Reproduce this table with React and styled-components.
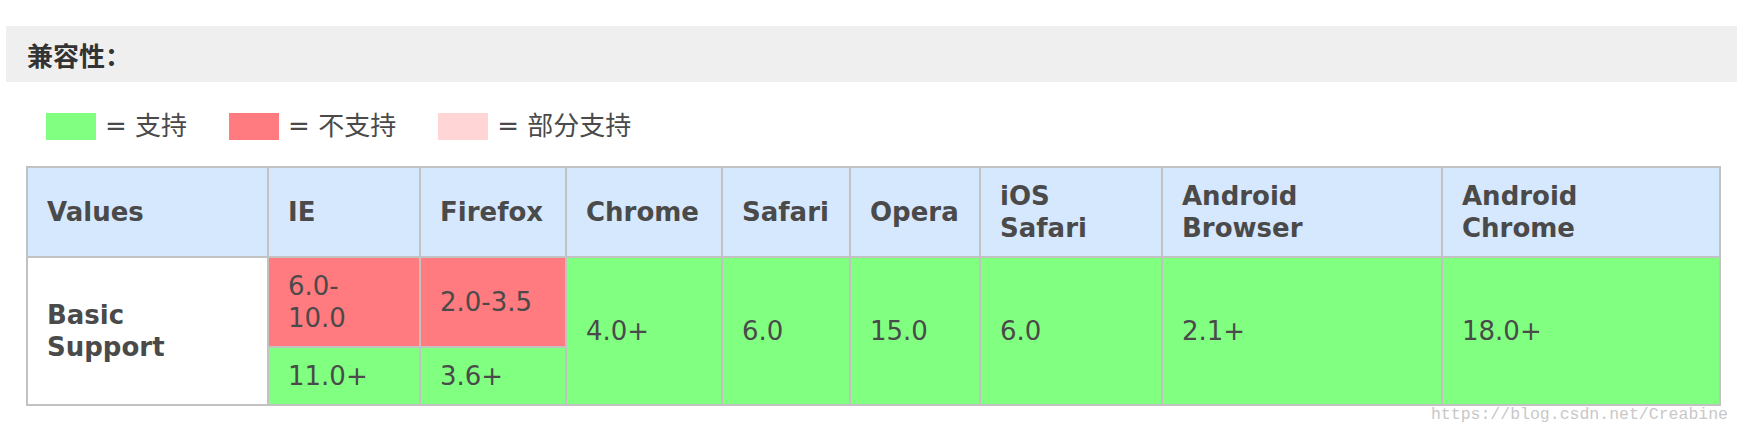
import React from 'react';
import styled, { createGlobalStyle } from 'styled-components';

const GlobalStyle = createGlobalStyle`
  body {
    margin: 0;
    background: #fff;
  }
`;

const legend = [
  { color: '#80ff80', label: '支持' },
  { color: '#ff7b7f', label: '不支持' },
  { color: '#ffd5d6', label: '部分支持' },
];

const columns = [
  { title: 'Values', width: 241 },
  { title: 'IE', width: 152 },
  { title: 'Firefox', width: 146 },
  { title: 'Chrome', width: 156 },
  { title: 'Safari', width: 128 },
  { title: 'Opera', width: 130 },
  { title: ['iOS', 'Safari'], width: 182 },
  { title: ['Android', 'Browser'], width: 280 },
  { title: ['Android', 'Chrome'], width: 278 },
];

const GREEN = '#80ff80';
const RED = '#ff7b7f';

export default function App() {
  return (
    <Page>
      <GlobalStyle />
      <TitleBar>兼容性：</TitleBar>

      <Legend>
        {legend.map((item) => (
          <LegendItem key={item.label}>
            <Swatch $color={item.color} />
            <LegendLabel>= {item.label}</LegendLabel>
          </LegendItem>
        ))}
      </Legend>

      <Table>
        <colgroup>
          {columns.map((c, i) => (
            <col key={i} style={{ width: c.width }} />
          ))}
        </colgroup>
        <thead>
          <tr>
            {columns.map((c, i) => (
              <Th key={i}>
                {Array.isArray(c.title) ? (
                  <>
                    {c.title[0]}
                    <br />
                    {c.title[1]}
                  </>
                ) : (
                  c.title
                )}
              </Th>
            ))}
          </tr>
        </thead>
        <tbody>
          <tr>
            <RowHead rowSpan={2}>
              Basic
              <br />
              Support
            </RowHead>
            <Td $bg={RED}>
              6.0-
              <br />
              10.0
            </Td>
            <Td $bg={RED}>2.0-3.5</Td>
            <Td $bg={GREEN} rowSpan={2}>4.0+</Td>
            <Td $bg={GREEN} rowSpan={2}>6.0</Td>
            <Td $bg={GREEN} rowSpan={2}>15.0</Td>
            <Td $bg={GREEN} rowSpan={2}>6.0</Td>
            <Td $bg={GREEN} rowSpan={2}>2.1+</Td>
            <Td $bg={GREEN} rowSpan={2}>18.0+</Td>
          </tr>
          <tr>
            <Td $bg={GREEN}>11.0+</Td>
            <Td $bg={GREEN}>3.6+</Td>
          </tr>
        </tbody>
      </Table>

      <Watermark>https://blog.csdn.net/Creabine</Watermark>
    </Page>
  );
}

const Page = styled.div`
  width: 1742px;
  box-sizing: border-box;
  padding: 26px 5px 0 6px;
`;

const TitleBar = styled.div`
  height: 56px;
  display: flex;
  align-items: center;
  padding-left: 21px;
  background: #efefef;
  color: #333;
  font-family: 'Noto Sans CJK SC', sans-serif;
  font-weight: 700;
  font-size: 26px;
`;

const Legend = styled.div`
  display: flex;
  align-items: center;
  gap: 42px;
  height: 28px;
  margin: 30px 0 0 40px;
`;

const LegendItem = styled.div`
  display: flex;
  align-items: center;
  color: #4a4a4a;
  font-family: 'DejaVu Sans', 'Noto Sans CJK SC', sans-serif;
  font-size: 26px;
`;

const LegendLabel = styled.span`
  white-space: pre;
  padding-bottom: 6px;
`;

const Swatch = styled.span`
  width: 50px;
  height: 27px;
  margin-right: 9px;
  background: ${(p) => p.$color};
`;

const Table = styled.table`
  table-layout: fixed;
  width: 1693px;
  margin: 26px 0 0 20px;
  border-collapse: collapse;
  font-family: 'DejaVu Sans', sans-serif;
  font-size: 26px;
  line-height: 32px;
  color: #4a4a4a;
`;

const Th = styled.th`
  border: 2px solid #c2c2c2;
  padding: 12px 19px;
  background: #d6e8fd;
  text-align: left;
  vertical-align: middle;
  font-weight: 700;
`;

const Td = styled.td`
  border: 2px solid #c2c2c2;
  padding: 12px 19px;
  background: ${(p) => p.$bg};
  text-align: left;
  vertical-align: middle;
`;

const RowHead = styled(Td)`
  background: #fff;
  font-weight: 700;
`;

const Watermark = styled.div`
  padding-right: 9px;
  text-align: right;
  color: #c8c8c8;
  font-family: 'Liberation Mono', monospace;
  font-size: 16.5px;
  line-height: 18px;
`;
